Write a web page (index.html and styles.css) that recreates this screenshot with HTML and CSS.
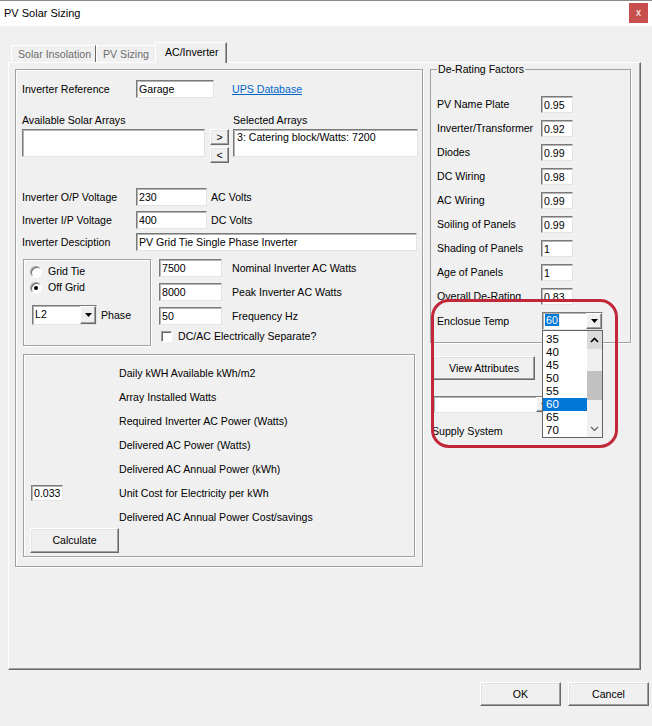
FILE: index.html
```html
<!DOCTYPE html>
<html lang="en">
<head>
    <meta charset="UTF-8">
    <title>PV Solar Sizing</title>
    <link rel="stylesheet" href="styles.css">
</head>
<body>
<div class="window">
    <div class="titlebar">
        <span class="title">PV Solar Sizing</span>
        <span class="close-btn">x</span>
    </div>

    <div class="tabs">
        <div class="tab first">Solar Insolation</div>
        <div class="tab">PV Sizing</div>
        <div class="tab active">AC/Inverter</div>
    </div>

    <div class="tab-panel">
        <!-- inverter settings -->
        <div class="frame inverter">
            <div class="row r-ref">
                <span class="cap">Inverter Reference</span>
                <input class="txt w-ref" value="Garage">
                <a class="link" href="#">UPS Database</a>
            </div>
            <div class="row r-caps">
                <span class="cap-wide">Available Solar Arrays</span>
                <span>Selected Arrays</span>
            </div>
            <div class="row r-arrays">
                <div class="listbox w-avail"></div>
                <div class="move-btns">
                    <button class="btn">&gt;</button>
                    <button class="btn">&lt;</button>
                </div>
                <div class="listbox w-sel">3: Catering block/Watts: 7200</div>
            </div>
            <div class="row r-op">
                <span class="cap">Inverter O/P Voltage</span>
                <input class="txt w-volt" value="230">
                <span class="unit">AC Volts</span>
            </div>
            <div class="row r-ip">
                <span class="cap">Inverter I/P Voltage</span>
                <input class="txt w-volt" value="400">
                <span class="unit">DC Volts</span>
            </div>
            <div class="row r-desc">
                <span class="cap">Inverter Desciption</span>
                <input class="txt w-desc" value="PV Grid Tie Single Phase Inverter">
            </div>

            <div class="row r-mid">
                <div class="frame grid-type">
                    <div class="opt"><span class="radio"></span>Grid Tie</div>
                    <div class="opt"><span class="radio on"></span>Off Grid</div>
                    <div class="phase-row">
                        <div class="combo w-phase">
                            <span class="combo-val">L2</span>
                            <span class="combo-btn"><svg width="7" height="4" viewBox="0 0 7 4"><polygon points="0,0 7,0 3.5,4" fill="#000"/></svg></span>
                        </div>
                        <span class="unit">Phase</span>
                    </div>
                </div>
                <div class="watts">
                    <div class="watt-row"><input class="txt w-watt" value="7500"><span class="watt-cap">Nominal Inverter AC Watts</span></div>
                    <div class="watt-row"><input class="txt w-watt" value="8000"><span class="watt-cap">Peak Inverter AC Watts</span></div>
                    <div class="watt-row"><input class="txt w-watt" value="50"><span class="watt-cap">Frequency Hz</span></div>
                    <div class="check-row"><span class="checkbox"></span>DC/AC Electrically Separate?</div>
                </div>
            </div>

            <div class="frame results">
                <div class="res-grid">
                    <span></span><span>Daily kWH Available kWh/m2</span>
                    <span></span><span>Array Installed Watts</span>
                    <span></span><span>Required Inverter AC Power (Watts)</span>
                    <span></span><span>Delivered AC Power (Watts)</span>
                    <span></span><span>Delivered AC Annual Power (kWh)</span>
                    <span><input class="txt w-cost" value="0.033"></span><span>Unit Cost for Electricity per kWh</span>
                    <span></span><span>Delivered AC Annual Power Cost/savings</span>
                </div>
                <button class="btn calc">Calculate</button>
            </div>
        </div>

        <!-- de-rating factors -->
        <div class="side">
            <fieldset class="derate">
                <legend>De-Rating Factors</legend>
                <div class="f-row"><span class="f-cap">PV Name Plate</span><input class="txt w-f" value="0.95"></div>
                <div class="f-row"><span class="f-cap">Inverter/Transformer</span><input class="txt w-f" value="0.92"></div>
                <div class="f-row"><span class="f-cap">Diodes</span><input class="txt w-f" value="0.99"></div>
                <div class="f-row"><span class="f-cap">DC Wiring</span><input class="txt w-f" value="0.98"></div>
                <div class="f-row"><span class="f-cap">AC Wiring</span><input class="txt w-f" value="0.99"></div>
                <div class="f-row"><span class="f-cap">Soiling of Panels</span><input class="txt w-f" value="0.99"></div>
                <div class="f-row"><span class="f-cap">Shading of Panels</span><input class="txt w-f" value="1"></div>
                <div class="f-row"><span class="f-cap">Age of Panels</span><input class="txt w-f" value="1"></div>
                <div class="f-row"><span class="f-cap">Overall De-Rating</span><input class="txt w-f" value="0.83"></div>
                <div class="f-row temp-row">
                    <span class="f-cap">Enclosue Temp</span>
                    <div class="combo w-temp">
                        <span class="combo-val"><span class="sel-text">60</span></span>
                        <span class="combo-btn"><svg width="7" height="4" viewBox="0 0 7 4"><polygon points="0,0 7,0 3.5,4" fill="#000"/></svg></span>
                    </div>
                </div>
            </fieldset>

            <button class="btn view-btn">View Attributes</button>
            <div class="combo w-supply">
                <span class="combo-val"></span>
                <span class="combo-btn"><svg width="7" height="4" viewBox="0 0 7 4"><polygon points="0,0 7,0 3.5,4" fill="#000"/></svg></span>
            </div>
            <div class="supply-cap">Supply System</div>
        </div>
    </div>

    <div class="footer">
        <button class="btn dlg-btn">OK</button>
        <button class="btn dlg-btn">Cancel</button>
    </div>

    <!-- open drop-down of the Enclosue Temp combo -->
    <div class="droplist">
        <div class="items">
            <div>35</div>
            <div>40</div>
            <div>45</div>
            <div>50</div>
            <div>55</div>
            <div class="picked">60</div>
            <div>65</div>
            <div>70</div>
        </div>
        <div class="vscroll">
            <span class="sb-up"><svg width="9" height="6" viewBox="0 0 9 6"><polyline points="1,5 4.5,1.5 8,5" fill="none" stroke="#000" stroke-width="1.6"/></svg></span>
            <span class="sb-thumb"></span>
            <span class="sb-down"><svg width="9" height="6" viewBox="0 0 9 6"><polyline points="1,1 4.5,4.5 8,1" fill="none" stroke="#606060" stroke-width="1.2"/></svg></span>
        </div>
    </div>

    <div class="ring"></div>
</div>
</body>
</html>
```

FILE: styles.css
```css
* {
    box-sizing: border-box;
}

body {
    margin: 0;
    background: #f0f0f0;
    color: #000;
    font-family: "Liberation Sans", Arial, sans-serif;
    font-size: 10.6px;
    line-height: 13px;
}

.window {
    position: relative;
    width: 652px;
    height: 726px;
    overflow: hidden;
}

/* title bar */
.titlebar {
    height: 26px;
    background: #fff;
    border-top: 1px solid #8a8a8a;
    display: flex;
    justify-content: space-between;
    align-items: flex-start;
    padding-left: 4px;
}

.title {
    font-size: 11px;
    margin-top: 6px;
}

.close-btn {
    width: 19px;
    height: 20px;
    margin: 2px 4px 0 0;
    background: #c7504f;
    color: #fff;
    font-size: 10px;
    line-height: 19px;
    text-align: center;
}

/* tabs */
.tabs {
    display: flex;
    align-items: flex-end;
    height: 36px;
    padding-left: 11px;
}

.tab {
    flex-shrink: 0;
    height: 17px;
    padding: 2px 6px 0;
    white-space: nowrap;
    color: #6d6d6d;
    border-left: 1px solid #fff;
    border-top: 1px solid #fff;
}

.tab.first {
    width: 85px;
    border-right: 1px solid #696969;
}

.tab.active {
    position: relative;
    z-index: 1;
    height: 21px;
    width: 72px;
    margin-bottom: -1px;
    padding: 3px 0 0 9px;
    color: #000;
    background: #f0f0f0;
    border-right: 1px solid #696969;
    box-shadow: inset -1px 0 0 #a0a0a0;
}

.tab-panel {
    margin-left: 8px;
    width: 633px;
    height: 608px;
    border: 1px solid;
    border-color: #fff #696969 #696969 #fff;
    box-shadow: inset -1px -1px 0 #a0a0a0;
    display: flex;
    align-items: flex-start;
    padding: 6px 0 0 6px;
}

/* etched group frame */
.frame {
    border: 1px solid #a0a0a0;
    box-shadow: inset 1px 1px 0 #fff, 1px 1px 0 #fff;
}

.inverter {
    width: 408px;
    padding: 10px 0 9px 6px;
}

.row {
    display: flex;
    align-items: center;
}

.cap {
    width: 114px;
}

.cap-wide {
    width: 211px;
}

.unit {
    margin-left: 4px;
}

.r-caps {
    margin-top: 16px;
}

.r-arrays {
    margin-top: 2px;
    align-items: flex-start;
}

.r-op {
    margin-top: 25px;
}

.r-ip {
    margin-top: 5px;
}

.r-desc {
    margin-top: 4px;
}

.r-mid {
    margin-top: 8px;
    align-items: flex-start;
}

/* text boxes */
.txt {
    height: 18px;
    margin: 0;
    padding: 0 2px;
    border: 1px solid;
    border-color: #7a7a7a #e3e3e3 #e3e3e3 #7a7a7a;
    box-shadow: inset 1px 1px 0 #b4b4b4;
    background: #fff;
    color: #000;
    font: inherit;
    outline: none;
}

.w-ref { width: 78px; }
.w-volt { width: 71px; }
.w-desc { width: 281px; }
.w-watt { width: 63px; }
.w-cost { width: 32px; height: 16px; }
.w-f { width: 32px; height: 17px; }

.link {
    margin-left: 18px;
    color: #0066cc;
}

.listbox {
    height: 28px;
    padding: 1px 3px;
    background: #fff;
    border: 1px solid;
    border-color: #7a7a7a #e3e3e3 #e3e3e3 #7a7a7a;
    box-shadow: inset 1px 1px 0 #b4b4b4;
}

.w-avail { width: 183px; }
.w-sel { width: 185px; }

.move-btns {
    display: flex;
    flex-direction: column;
    gap: 2px;
    margin: 0 4px 0 5px;
}

.move-btns .btn {
    width: 19px;
    height: 16px;
    line-height: 12px;
}

/* raised buttons */
.btn {
    margin: 0;
    padding: 0;
    font: inherit;
    color: #000;
    background: #f0f0f0;
    border: 1px solid;
    border-color: #fff #696969 #696969 #fff;
    box-shadow: inset -1px -1px 0 #a0a0a0, inset 1px 1px 0 #e3e3e3;
}

/* grid tie / off grid */
.grid-type {
    width: 128px;
    height: 87px;
    margin-left: 1px;
    padding: 5px 0 0 6px;
}

.opt {
    display: flex;
    align-items: center;
    height: 13px;
    margin-bottom: 3px;
}

.radio {
    position: relative;
    width: 12px;
    height: 12px;
    margin-right: 6px;
    border-radius: 50%;
    background: #fff;
    border: 1px solid;
    border-color: #a0a0a0 #fff #fff #a0a0a0;
    box-shadow: inset 1px 1px 0 #696969;
}

.radio.on::after {
    content: "";
    position: absolute;
    left: 3px;
    top: 3px;
    width: 4px;
    height: 4px;
    border-radius: 50%;
    background: #000;
}

.phase-row {
    display: flex;
    align-items: center;
    margin: 11px 0 0 2px;
}

.combo {
    display: flex;
    background: #fff;
    border: 1px solid;
    border-color: #7a7a7a #e3e3e3 #e3e3e3 #7a7a7a;
    box-shadow: inset 1px 1px 0 #b4b4b4;
}

.combo-val {
    flex: 1;
    padding: 2px 0 0 2px;
}

.combo-btn {
    width: 16px;
    display: flex;
    align-items: center;
    justify-content: center;
    background: #f0f0f0;
    border: 1px solid;
    border-color: #fff #696969 #696969 #fff;
    box-shadow: inset -1px -1px 0 #a0a0a0;
}

.w-phase {
    width: 65px;
    height: 20px;
}

.watts {
    margin-left: 8px;
}

.watt-row {
    display: flex;
    align-items: center;
    margin-bottom: 6px;
}

.watt-cap {
    margin-left: 10px;
}

.check-row {
    display: flex;
    align-items: center;
    margin: -1px 0 0 2px;
}

.checkbox {
    width: 11px;
    height: 11px;
    margin-right: 6px;
    background: #fff;
    border: 1px solid;
    border-color: #a0a0a0 #fff #fff #a0a0a0;
    box-shadow: inset 1px 1px 0 #696969;
}

/* results box */
.results {
    width: 392px;
    height: 203px;
    margin: 8px 0 0 1px;
    padding: 6px 0 0 7px;
}

.res-grid {
    display: grid;
    grid-template-columns: 88px auto;
    grid-auto-rows: 24px;
    align-items: center;
}

.calc {
    width: 89px;
    height: 25px;
    margin: -1px 0 0 -1px;
}

/* right column */
.side {
    width: 201px;
    margin: -6px 0 0 7px;
}

.derate {
    margin: 0;
    padding: 20px 6px 12px;
    border: 1px solid #a0a0a0;
    box-shadow: 1px 1px 0 #fff;
}

.derate legend {
    padding: 0 1px;
}

.f-row {
    display: flex;
    align-items: center;
    margin-bottom: 7px;
}

.f-cap {
    width: 104px;
}

.temp-row {
    margin-bottom: 0;
}

.w-temp {
    width: 61px;
    height: 18px;
    margin-left: 1px;
}

.w-temp .combo-val {
    padding: 1px 0 0 2px;
}

.sel-text {
    background: #0078d7;
    color: #fff;
    padding: 0 1px;
}

.view-btn {
    display: block;
    width: 102px;
    height: 24px;
    margin: 13px 0 0 3px;
}

.w-supply {
    width: 120px;
    height: 17px;
    margin: 16px 0 0 3px;
}

.supply-cap {
    margin: 12px 0 0 2px;
}

/* dialog buttons */
.footer {
    display: flex;
    justify-content: flex-end;
    gap: 7px;
    margin-top: 12px;
    padding-right: 3px;
}

.dlg-btn {
    width: 81px;
    height: 24px;
}

/* open drop-down list */
.droplist {
    position: absolute;
    left: 542px;
    top: 330px;
    width: 61px;
    height: 108px;
    display: flex;
    background: #fff;
    border: 1px solid #646464;
}

.items {
    flex: 1;
    padding-top: 2px;
}

.items div {
    height: 13px;
    line-height: 13px;
    padding-left: 3px;
    font-size: 11.5px;
}

.items .picked {
    background: #0078d7;
    color: #fff;
}

.vscroll {
    width: 15px;
    display: flex;
    flex-direction: column;
    background: #f0f0f0;
}

.sb-up {
    height: 18px;
    background: #dadada;
    display: flex;
    align-items: center;
    justify-content: center;
}

.sb-thumb {
    height: 29px;
    margin-top: 22px;
    background: #c1c1c1;
}

.sb-down {
    height: 17px;
    margin-top: auto;
    display: flex;
    align-items: center;
    justify-content: center;
}

/* red highlight ring */
.ring {
    position: absolute;
    left: 431px;
    top: 299px;
    width: 187px;
    height: 149px;
    border: 3px solid #c0283a;
    border-radius: 18px;
}
```
